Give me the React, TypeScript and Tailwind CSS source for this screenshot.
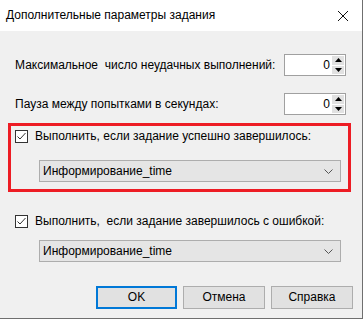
import { useState } from 'react';

const font = { fontFamily: '"Liberation Sans", Arial, sans-serif' };

function Spinner({ value }: { value: number }) {
  return (
    <div className="flex h-[22px] w-[62px] shrink-0 items-stretch border border-[#a0a0a0] bg-white">
      <div className="flex flex-1 items-center justify-end pr-[2px] text-[12px] text-black">{value}</div>
      <div className="my-[1px] mr-[1px] flex w-[12px] flex-col gap-[1px]">
        <div className="flex flex-1 items-center justify-center bg-[#e1e1e1]">
          <svg width="7" height="4" viewBox="0 0 7 4">
            <path d="M0 4 L3.5 0 L7 4 Z" fill="#000" />
          </svg>
        </div>
        <div className="flex flex-1 items-center justify-center bg-[#e1e1e1]">
          <svg width="7" height="4" viewBox="0 0 7 4">
            <path d="M0 0 L7 0 L3.5 4 Z" fill="#000" />
          </svg>
        </div>
      </div>
    </div>
  );
}

function CheckBox({ checked, onToggle }: { checked: boolean; onToggle: () => void }) {
  return (
    <button
      onClick={onToggle}
      className="flex h-[13px] w-[13px] shrink-0 items-center justify-center border border-[#333333] bg-white p-0"
    >
      {checked && (
        <svg width="11" height="11" viewBox="0 0 11 11">
          <path d="M1.5 5.5 L4 8 L9.5 2" fill="none" stroke="#333333" strokeWidth="1" />
        </svg>
      )}
    </button>
  );
}

function Combo({ value }: { value: string }) {
  return (
    <div className="ml-[28px] flex h-[22px] w-[302px] items-center justify-between border border-[#adadad] bg-[#e5e5e5] pl-[3px] pr-[7px] text-[12px] text-black">
      <span>{value}</span>
      <svg width="9" height="5" viewBox="0 0 9 5">
        <path d="M0.5 0.5 L4.5 4.5 L8.5 0.5" fill="none" stroke="#555555" strokeWidth="1" />
      </svg>
    </div>
  );
}

export default function App() {
  const [onSuccess, setOnSuccess] = useState(true);
  const [onError, setOnError] = useState(true);

  return (
    <div style={font} className="flex h-[319px] w-[363px] flex-col overflow-hidden border-b border-r border-[#6f6f6f] bg-[#f0f0f0] leading-[15px] whitespace-nowrap text-black">
      {/* Title bar */}
      <div className="flex h-[31px] shrink-0 items-center justify-between bg-white pl-[6px] pr-[14px]">
        <span className="text-[12px]">Дополнительные параметры задания</span>
        <svg width="10" height="10" viewBox="0 0 10 10">
          <path d="M0 0 L10 10 M10 0 L0 10" stroke="#111" strokeWidth="1" />
        </svg>
      </div>

      <div className="flex flex-col px-[8px] pt-[23px] text-[12px]">
        <div className="flex items-center justify-between pl-[7px] pr-[8px]">
          <span>Максимальное&nbsp; число неудачных выполнений:</span>
          <Spinner value={0} />
        </div>
        <div className="mt-[17px] flex items-center justify-between pl-[7px] pr-[8px]">
          <span>Пауза между попытками в секундах:</span>
          <Spinner value={0} />
        </div>

        {/* Highlighted block */}
        <div className="mt-[8px] flex w-[343px] flex-col border-[3px] border-[#ed1c24] pb-[7px] pt-[3px]">
          <div className="flex h-[14px] items-center gap-[7px] pl-[4px]">
            <CheckBox checked={onSuccess} onToggle={() => setOnSuccess(!onSuccess)} />
            <span>Выполнить, если задание успешно завершилось:</span>
          </div>
          <div className="mt-[17px]">
            <Combo value="Информирование_time" />
          </div>
        </div>

        <div className="mt-[22px] flex h-[14px] items-center gap-[7px] pl-[7px]">
          <CheckBox checked={onError} onToggle={() => setOnError(!onError)} />
          <span>Выполнить,&nbsp; если задание завершилось с ошибкой:</span>
        </div>
        <div className="mt-[12px] pl-[3px]">
          <Combo value="Информирование_time" />
        </div>

        <div className="mt-[24px] flex justify-end gap-[6px] pr-[1px]">
          <button className="h-[23px] w-[81px] border-2 border-[#0078d7] bg-[#e1e1e1] text-[12px]">OK</button>
          <button className="h-[23px] w-[82px] border border-[#adadad] bg-[#e1e1e1] text-[12px]">Отмена</button>
          <button className="h-[23px] w-[82px] border border-[#adadad] bg-[#e1e1e1] text-[12px]">Справка</button>
        </div>
      </div>
    </div>
  );
}
